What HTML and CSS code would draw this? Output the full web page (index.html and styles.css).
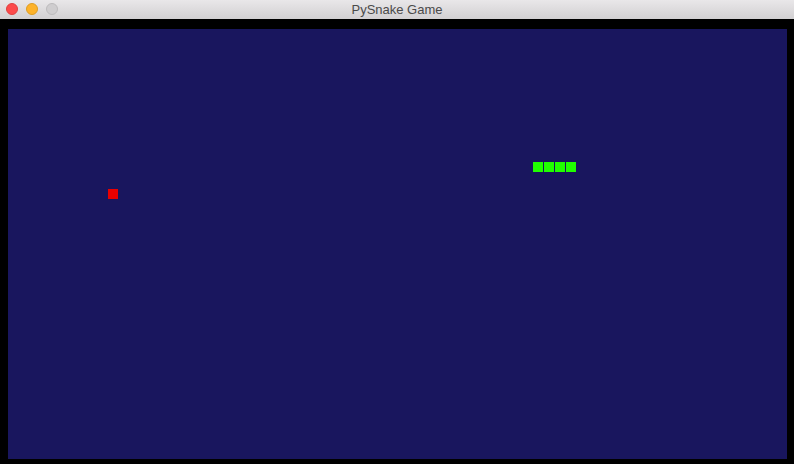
FILE: index.html
```html
<!DOCTYPE html>
<html>
<head>
<meta charset="utf-8">
<title>PySnake Game</title>
<link rel="stylesheet" href="styles.css">
</head>
<body>
<div class="window">
  <div class="titlebar">
    <div class="lights">
      <span class="light close"></span>
      <span class="light minimize"></span>
      <span class="light zoom"></span>
    </div>
    <div class="title">PySnake Game</div>
  </div>
  <div class="frame">
    <div class="board">
      <div class="snake">
        <span class="cell"></span><span class="cell"></span><span class="cell"></span><span class="cell"></span>
      </div>
      <div class="food"></div>
    </div>
  </div>
</div>
</body>
</html>
```
FILE: styles.css
```css
html, body {
  margin: 0;
  padding: 0;
  background: #000;
}
.window {
  width: 794px;
  height: 464px;
  display: flex;
  flex-direction: column;
  background: #000;
  overflow: hidden;
}
.titlebar {
  position: relative;
  height: 19px;
  flex: 0 0 19px;
  background: linear-gradient(#e9e7e9, #d2d0d2);
  display: flex;
  align-items: center;
  justify-content: center;
}
.lights {
  position: absolute;
  left: 6px;
  top: 3px;
  display: flex;
  gap: 8px;
}
.light {
  width: 12px;
  height: 12px;
  border-radius: 50%;
  box-sizing: border-box;
}
.close { background: #fc4a4a; border: 1px solid #e0403f; }
.minimize { background: #fdb22a; border: 1px solid #de9d22; }
.zoom { background: #cfcdcf; border: 1px solid #bdbbbd; }
.title {
  font-family: "Liberation Sans", Arial, sans-serif;
  font-size: 13px;
  color: #4a4a4a;
  line-height: 19px;
}
.frame {
  flex: 1;
  padding: 10px 7px 5px 8px;
  display: flex;
}
.board {
  position: relative;
  flex: 1;
  background: #19165e;
}
.snake {
  position: absolute;
  left: 525px;
  top: 133px;
  display: flex;
  gap: 1px;
}
.cell {
  width: 10px;
  height: 10px;
  background: #20ff00;
}
.food {
  position: absolute;
  left: 100px;
  top: 160px;
  width: 10px;
  height: 10px;
  background: #ea0000;
}
```
